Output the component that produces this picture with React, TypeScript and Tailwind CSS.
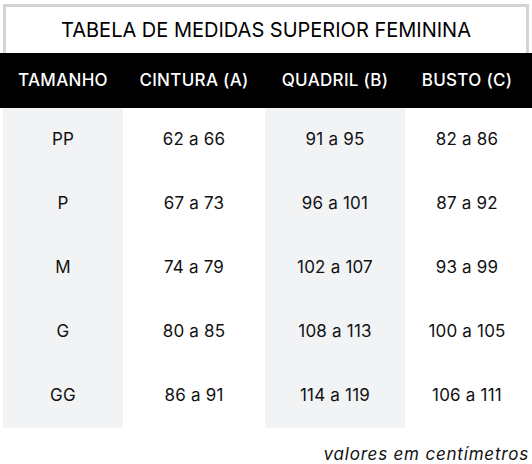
const rows = [
  ["PP", "62 a 66", "91 a 95", "82 a 86"],
  ["P", "67 a 73", "96 a 101", "87 a 92"],
  ["M", "74 a 79", "102 a 107", "93 a 99"],
  ["G", "80 a 85", "108 a 113", "100 a 105"],
  ["GG", "86 a 91", "114 a 119", "106 a 111"],
]

const cols = "grid grid-cols-[120px_142px_140px_124px]"

export default function App() {
  return (
    <div className="w-[532px] h-[464px] bg-white text-[#111] font-['Inter',sans-serif]">
      <div className="mx-[3px] mt-[4px] h-[49px] border-[3px] border-b-0 border-[#d4d4d4] flex items-center justify-center text-[20px] text-black">
        TABELA DE MEDIDAS SUPERIOR FEMININA
      </div>
      <div className={`${cols} bg-black text-white text-[17px] tracking-[0.3px] font-medium h-[55px] px-[3px] items-center text-center`}>
        <div>TAMANHO</div>
        <div>CINTURA (A)</div>
        <div>QUADRIL (B)</div>
        <div>BUSTO (C)</div>
      </div>
      <div className={`${cols} px-[3px] text-[17px] tracking-[0.2px] text-center`}>
        {rows.map((r) => (
          <>
            <div key={r[0] + "a"} className="h-[64px] flex items-center justify-center bg-[#f2f3f5]">{r[0]}</div>
            <div key={r[0] + "b"} className="h-[64px] flex items-center justify-center">{r[1]}</div>
            <div key={r[0] + "c"} className="h-[64px] flex items-center justify-center bg-[#f2f3f5]">{r[2]}</div>
            <div key={r[0] + "d"} className="h-[64px] flex items-center justify-center">{r[3]}</div>
          </>
        ))}
      </div>
      <div className="pr-[3px] pt-[15px] text-right italic text-[17px] tracking-[0.8px] leading-[22px]">
        valores em centímetros
      </div>
    </div>
  )
}
